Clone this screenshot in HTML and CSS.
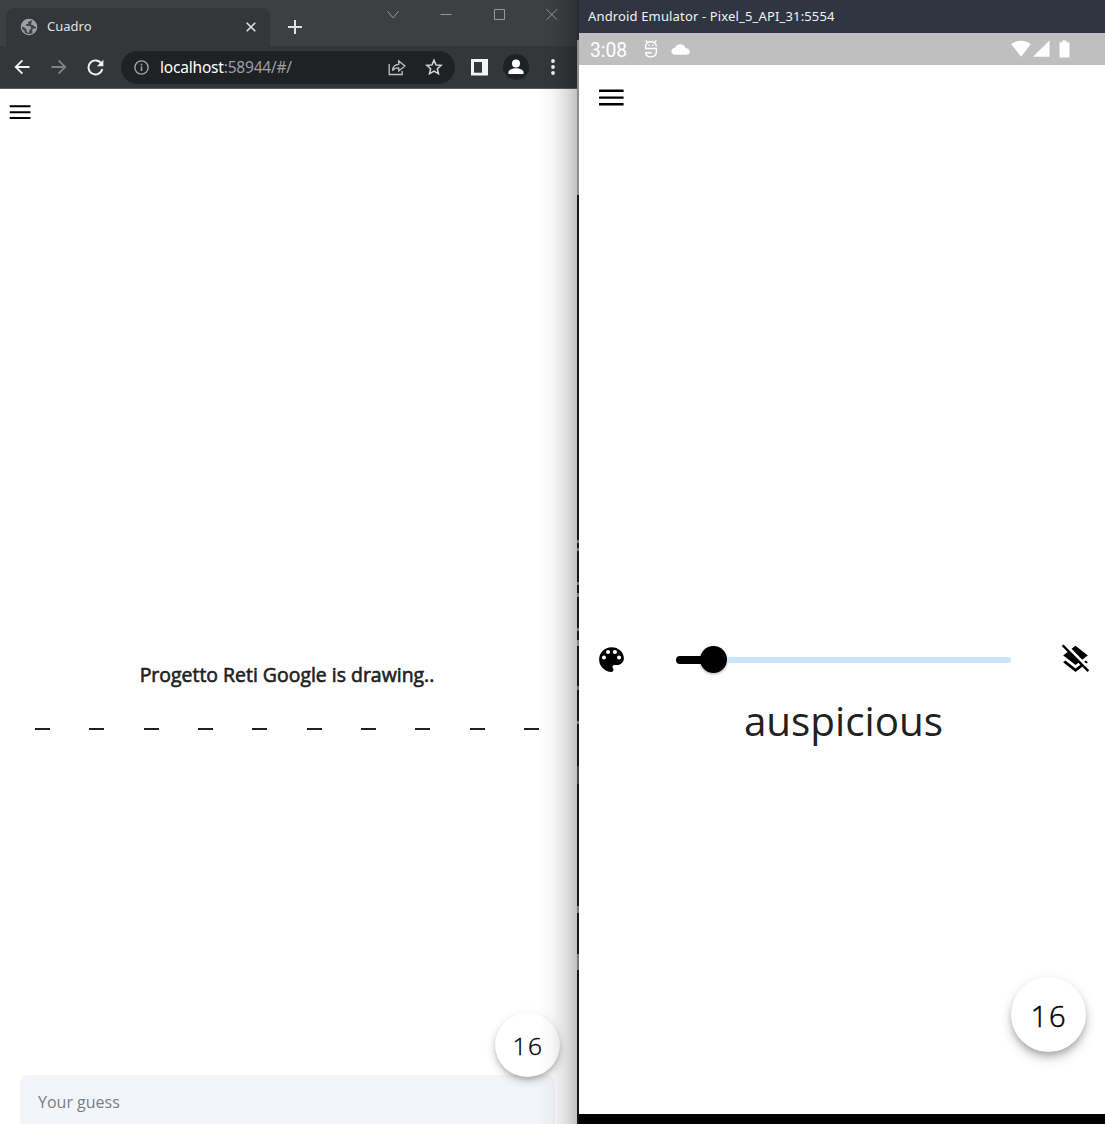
FILE: index.html
```html
<!DOCTYPE html>
<html lang="en">
<head>
<meta charset="utf-8">
<title>Cuadro</title>
<link rel="stylesheet" href="styles.css">
</head>
<body>
<div class="desktop">
  <section class="browser">
    <header class="tabstrip">
      <div class="tab">
        <svg class="globe" width="18" height="18" viewBox="0 0 18 18"><circle cx="9" cy="9" r="7.7" fill="#424448" stroke="#9aa0a6" stroke-width="1.2"/><path d="M1.2 8.3C1.5 4.2 4.9 1 9 1c.9 0 1.6.1 2.3.4L10.4 3 8 4l.3 1.7-2.4.8.3 1.5h4l1.2 2.3-1.6 1.2-1 3.2-2-.5-.3-3-2.2-1.6zM12.5 2l3.3 3 .9 4-2-.2-1.5-1.6-2-.4.2-2.3z" fill="#9aa0a6"/><path d="M16.5 11l-2.7-.8-1.6 1.5.4 3.7c2-1 3.4-2.4 3.9-4.4zM2 11.3l2.4 1.3.5 2.6C3.5 14.4 2.4 13 2 11.3z" fill="#9aa0a6"/></svg>
        <span class="tab-title">Cuadro</span>
        <svg class="tab-close" width="12" height="12" viewBox="0 0 12 12"><path d="M1.7 1.7l8.6 8.6m0-8.6l-8.6 8.6" stroke="#dfe1e5" stroke-width="1.6"/></svg>
      </div>
      <svg class="new-tab" width="16" height="16" viewBox="0 0 16 16"><path d="M1 8h14M8 1v14" stroke="#dfe1e5" stroke-width="2"/></svg>
      <div class="controls">
        <svg width="12" height="12" viewBox="0 0 12 12"><path d="M.5 3.2L6 9.9l5.5-6.7"/></svg>
        <svg width="12" height="12" viewBox="0 0 12 12"><path d="M.5 6.5h11"/></svg>
        <svg width="12" height="12" viewBox="0 0 12 12"><path d="M1.5 1.5h10v10h-10z"/></svg>
        <svg width="12" height="12" viewBox="0 0 12 12"><path d="M.5 1.2l10.6 10.6m0-10.6L.5 11.8"/></svg>
      </div>
    </header>
    <nav class="toolbar">
      <svg class="back" width="16" height="16" viewBox="0 0 16 16"><path d="M15.5 8H2M8.4 1.3L1.7 8l6.7 6.7" fill="none" stroke="#f1f3f4" stroke-width="1.8"/></svg>
      <svg class="forward" width="16" height="16" viewBox="0 0 16 16"><path d="M.5 8H14M7.6 1.3L14.3 8l-6.7 6.7" fill="none" stroke="#818286" stroke-width="1.8"/></svg>
      <svg class="reload" width="17" height="17" viewBox="0 0 17 17"><path d="M14.6 5A7 7 0 1 0 15.3 10" fill="none" stroke="#f1f3f4" stroke-width="1.9"/><path d="M16.4.8v6.5H9.9z" fill="#f1f3f4"/></svg>
      <div class="omnibox">
        <svg width="15" height="15" viewBox="0 0 15 15"><circle cx="7.5" cy="7.5" r="6.6" fill="none" stroke="#a1a4a8" stroke-width="1.4"/><path d="M7.5 6.5V11M7.5 3.8v1.6" stroke="#a1a4a8" stroke-width="1.5"/></svg>
        <span class="url"><span class="host">localhost</span>:58944/#/</span>
        <svg class="share" width="18" height="17" viewBox="0 0 18 17"><path d="M1.2 5v10.5h13V12M4.5 11.5c.5-4 2.5-6 6.2-6.1V2l6.2 5.1-6.2 4.8V8.8c-2.7 0-4.7.6-6.2 2.7z" fill="none" stroke="#bdc1c6" stroke-width="1.3"/></svg>
        <svg class="star" width="18" height="18" viewBox="0 0 18 18"><path d="M9 2.2l2 4.7 5.2.5-3.9 3.4 1.2 5L9 13.1l-4.5 2.7 1.2-5-3.9-3.4 5.2-.5z" fill="none" stroke="#d4d6d9" stroke-width="1.5"/></svg>
      </div>
      <svg class="panel" width="17" height="17" viewBox="0 0 17 17"><path d="M0 0h17v16.5H0z" fill="#f1f3f4"/><path d="M3 3h8v10.7H3z" fill="#35363a"/></svg>
      <svg class="avatar" width="26" height="26" viewBox="0 0 26 26"><circle cx="13" cy="13" r="13" fill="#202124"/><circle cx="13" cy="9.5" r="4" fill="#fff"/><path d="M5.5 20v-1.8c0-2.5 4.8-3.9 7.5-3.9s7.5 1.4 7.5 3.9V20z" fill="#fff"/></svg>
      <svg class="kebab" width="4" height="16" viewBox="0 0 4 16" fill="#f1f3f4"><circle cx="2" cy="2" r="1.9"/><circle cx="2" cy="8" r="1.9"/><circle cx="2" cy="14" r="1.9"/></svg>
    </nav>
    <main class="web-page">
      <svg class="menu" width="22" height="16" viewBox="0 0 22 16"><path d="M.7 2.2h20.8M.7 8.2h20.8M.7 14h20.8" stroke="#000" stroke-width="2"/></svg>
      <h1 class="status">Progetto Reti Google is drawing..</h1>
      <div class="blanks"><i></i><i></i><i></i><i></i><i></i><i></i><i></i><i></i><i></i><i></i></div>
      <div class="guess">Your guess</div>
      <div class="timer">16</div>
    </main>
    <div class="edge-shade"></div>
  </section>
  <div class="gap"><i class="gap-top"></i><i class="gap-light"></i><i class="gap-marks"></i></div>
  <section class="emulator">
    <header class="titlebar">Android Emulator - Pixel_5_API_31:5554</header>
    <div class="statusbar">
      <span class="clock">3:08</span>
      <svg class="debug" width="14" height="18" viewBox="0 0 14 18" fill="none" stroke="#fff" stroke-width="1.4"><path d="M1.6.6l1.8 1.8M12.4.6l-1.8 1.8M12.4 6.6C12.4.2 1.6.2 1.6 6.6V8.5h10.8v3c0 7-10.8 7-10.8 1.2h6M4.5 5.2h1.3m2.4 0h1.3"/></svg>
      <svg class="cloud" width="19" height="11" viewBox="0 0 19 11"><path d="M4.5 10.8C-1 10.8-.8 4.2 3.9 4 5.7-1 13-1 14.4 4c5.7.3 5.4 6.8 1 6.8z" fill="#fff"/></svg>
      <svg class="signals" width="59" height="18" viewBox="0 0 59 18" fill="#fff"><path d="M.3 4.2C5.5-.4 14.5-.4 19.7 4.2L10 16.7zM22 16.8L38.5.6v16.2zM48.5 2.2h2.8V.6h4v1.6H58.5v15.3h-10z"/></svg>
    </div>
    <main class="app">
      <svg class="app-menu" width="25" height="18" viewBox="0 0 25 18"><path d="M0 2.8h24.6M0 9.6h24.6M0 16.3h24.6" stroke="#000" stroke-width="2.4"/></svg>
      <div class="tools">
        <svg class="palette" width="33" height="33" viewBox="0 0 24 24"><path d="M12 3a9 9 0 0 0 0 18c.83 0 1.5-.67 1.5-1.5 0-.39-.15-.74-.39-1.01-.23-.26-.38-.61-.38-.99 0-.83.67-1.5 1.5-1.5H16c2.76 0 5-2.24 5-5 0-4.42-4.03-8-9-8zm-5.5 9a1.5 1.5 0 1 1 0-3 1.5 1.5 0 0 1 0 3zm3-4a1.5 1.5 0 1 1 0-3 1.5 1.5 0 0 1 0 3zm5 0a1.5 1.5 0 1 1 0-3 1.5 1.5 0 0 1 0 3zm3 4a1.5 1.5 0 1 1 0-3 1.5 1.5 0 0 1 0 3z"/></svg>
        <div class="slider"><i class="filled"></i><i class="thumb"></i><i class="track"></i></div>
        <svg class="layers" width="33" height="33" viewBox="0 0 24 24"><path d="M19.81 14.99l1.19-.92-1.43-1.43-1.19.92 1.43 1.43zm-.45-4.72L21 9l-9-7-2.91 2.27 7.87 7.88 2.4-1.88zM3.27 1L2 2.27l4.22 4.22L3 9l1.63 1.27L12 16l2.1-1.63 1.43 1.43L12 18.54l-7.37-5.73L3 14.07l9 7 4.95-3.85L20.73 21 22 19.73 3.27 1z"/></svg>
      </div>
      <div class="word">auspicious</div>
      <div class="timer timer-large">16</div>
    </main>
  </section>
</div>
</body>
</html>
```
FILE: styles.css
```css
* { box-sizing: border-box; }
body { margin: 0; background: #fff; font-family: "Open Sans", "Noto Sans", sans-serif; overflow: hidden; }
svg { display: block; flex: none; }
i { display: block; }

.desktop { display: grid; grid-template-columns: 577px 2px 526px; height: 1124px; }

.browser { position: relative; display: flex; flex-direction: column; min-width: 0; overflow: hidden; }
.tabstrip { display: flex; height: 46px; background: #3c4043; flex: none; padding-left: 6px; }
.tab { display: flex; align-items: center; width: 264px; height: 38px; margin-top: 8px; padding: 0 13px 0 15px; background: #35363a; border-radius: 8px 8px 0 0; }
.globe { margin-left: -1px; }
.tab-title { flex: 1; margin: -2px 0 0 9px; font: 13px/18px "Noto Sans", sans-serif; color: #dfe1e5; }
.new-tab { margin: 19px 0 0 17px; }
.controls { display: flex; gap: 41px; margin: 8px 0 0 84px; }
.controls path { fill: none; stroke: #96999c; stroke-width: 1; }

.toolbar { display: flex; align-items: center; height: 43px; flex: none; background: #35363a; border-bottom: 1px solid #5b5c60; padding-left: 14px; }
.forward { margin-left: 21px; }
.reload { margin-left: 20px; }
.omnibox { display: flex; align-items: center; width: 334px; height: 33px; margin-left: 17px; padding: 0 12px 0 13px; border-radius: 17px; background: #202124; }
.url { flex: 1; margin-left: 11px; font: 15.5px/22px "Noto Sans", sans-serif; letter-spacing: -.2px; color: #9aa0a6; }
.host { color: #fff; }
.star { margin-left: 19px; }
.panel { margin-left: 16px; }
.avatar { margin-left: 15px; }
.kebab { margin-left: 22px; }

.web-page { position: relative; flex: 1; display: flex; flex-direction: column; overflow: hidden; }
.menu { margin: 15px 0 0 9px; flex: none; }
.status { margin: 540px 0 0; padding-right: 3px; height: 30px; font-size: 19.45px; line-height: 30px; font-weight: 400; text-align: center; color: #212121; -webkit-text-stroke: .6px #212121; white-space: nowrap; }
.blanks { display: flex; justify-content: space-between; margin: 38px 38px 0 35px; }
.blanks i { width: 15px; height: 2px; background: #212121; }
.guess { margin: 345px 22px 0 20px; height: 60px; padding: 15px 18px; border-radius: 8px; background: #f4f5fa; color: #7b7d82; font-size: 16px; line-height: 24px; flex: none; }
.timer { position: absolute; left: 495px; top: 924px; width: 65px; height: 64px; padding: 2px 0 0 1px; border-radius: 50%; background: #fff; color: #000; font-size: 24.5px; font-weight: 300; -webkit-text-stroke: .35px #000; line-height: 62px; letter-spacing: 1.6px; text-align: center; box-shadow: 0 3px 5px -1px rgba(0,0,0,.2), 0 5px 10px rgba(0,0,0,.14), 0 1px 14px rgba(0,0,0,.04); }
.edge-shade { position: absolute; inset: 0 0 0 auto; width: 38px; background: linear-gradient(to right, rgba(0,0,0,0), rgba(0,0,0,.035) 35%, rgba(0,0,0,.12) 70%, rgba(0,0,0,.24)); }

.gap { background: #17171b; display: flex; flex-direction: column; }
.gap-top { height: 40px; background: #292b35; }
.gap-light { height: 155px; background: #8e8e8e; }
.gap-marks { height: 780px; background: linear-gradient(#777, #777) 0 345px / 2px 3px no-repeat, linear-gradient(#777, #777) 0 353px / 2px 3px no-repeat, linear-gradient(#777, #777) 0 387px / 2px 3px no-repeat, linear-gradient(#777, #777) 0 398px / 2px 4px no-repeat, linear-gradient(#777, #777) 0 433px / 2px 3px no-repeat, linear-gradient(#888, #888) 0 445px / 2px 6px no-repeat, linear-gradient(#666, #666) 0 491px / 2px 4px no-repeat, linear-gradient(#777, #777) 0 526px / 2px 3px no-repeat, linear-gradient(#444, #444) 0 571px / 2px 18px no-repeat, linear-gradient(#777, #777) 0 711px / 2px 7px no-repeat, linear-gradient(#777, #777) 0 759px / 2px 16px no-repeat; }

.emulator { display: flex; flex-direction: column; background: #000; }
.titlebar { height: 33px; background: #2f3541; color: #f2f3f5; padding-left: 9px; font: 13px/32px "Noto Sans", sans-serif; letter-spacing: .15px; }
.statusbar { display: flex; align-items: center; height: 32px; background: #bfbfbf; padding: 0 35px 0 11px; }
.clock { font: 19.3px/32px Roboto, sans-serif; color: #fff; padding-top: 3px; width: 54px; }
.cloud { margin-left: 13px; }
.signals { margin-left: auto; }
.app { position: relative; height: 1049px; padding-top: 23px; background: #fff; }
.app-menu { margin-left: 20px; }
.tools { display: flex; align-items: center; height: 34px; margin-top: 536px; padding: 0 13px 0 16px; }
.slider { display: flex; align-items: center; width: 335px; margin: 1px 0 0 48px; }
.filled { width: 26px; height: 8px; border-radius: 4px 0 0 4px; background: #000; margin-right: -2px; }
.thumb { width: 27px; height: 27px; border-radius: 50%; background: #000; box-shadow: 0 1px 3px rgba(0,0,0,.35); }
.track { flex: 1; height: 6px; border-radius: 0 3px 3px 0; background: #c9e5fb; }
.layers { margin-left: auto; }
.word { height: 60px; margin-top: 15px; padding-left: 3px; font-size: 40.4px; line-height: 60px; text-align: center; color: #212121; }
.timer-large { left: 432px; top: 912px; width: 75px; height: 75px; font-size: 29px; line-height: 73px; -webkit-text-stroke-width: .5px; box-shadow: 0 4px 6px -1px rgba(0,0,0,.22), 0 7px 12px rgba(0,0,0,.16), 0 1px 16px rgba(0,0,0,.04); }
```
